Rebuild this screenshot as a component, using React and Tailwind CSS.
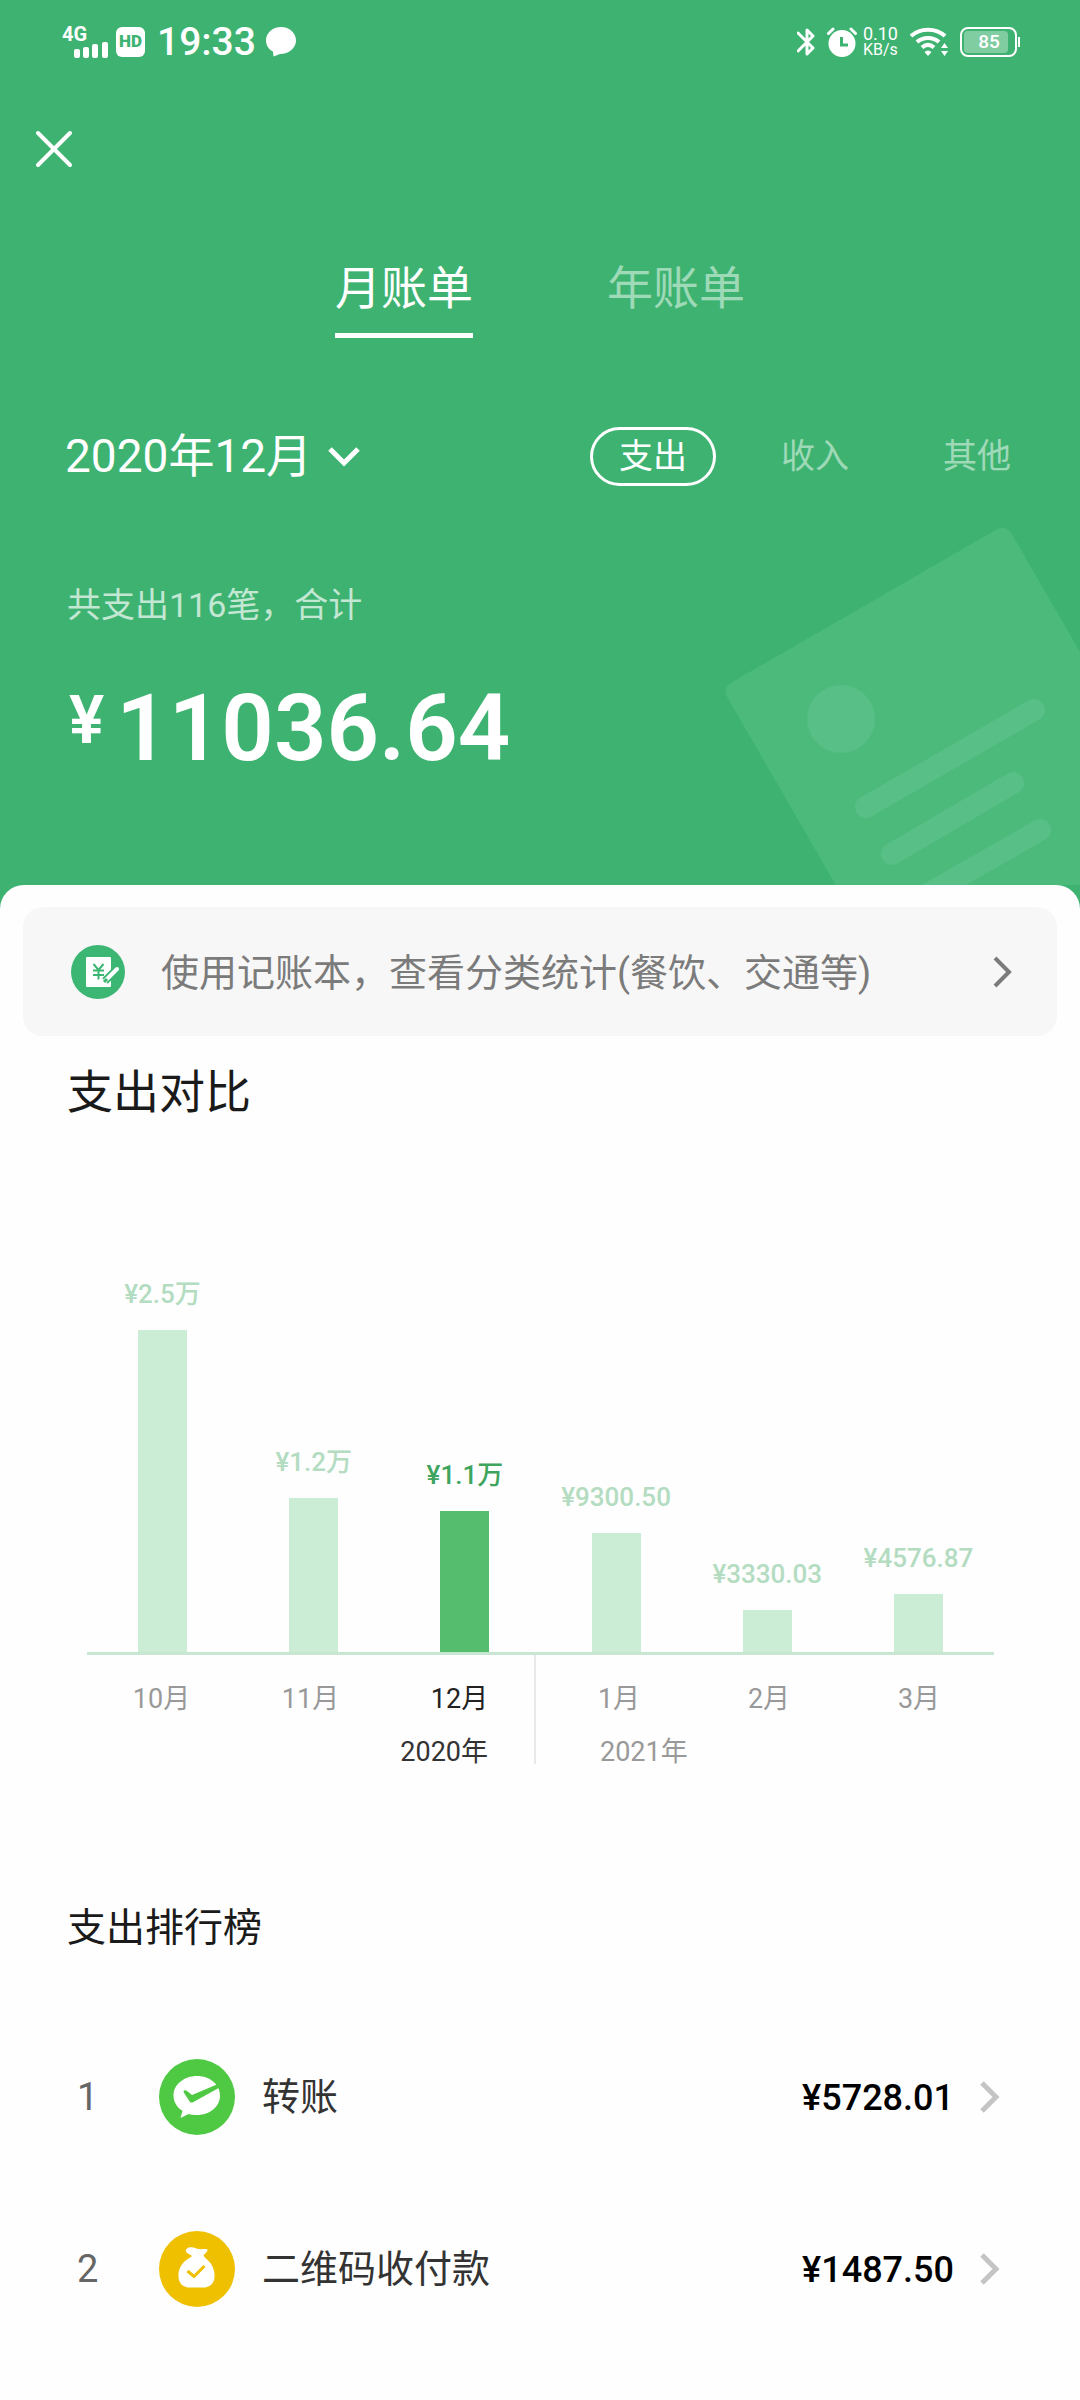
import { useState } from 'react';

const tabs = [
  { id: 'month', label: '月账单' },
  { id: 'year', label: '年账单' },
];

const kinds = ['支出', '收入', '其他'];

const bars = [
  { label: '¥2.5万', height: 322 },
  { label: '¥1.2万', height: 154 },
  { label: '¥1.1万', height: 141, active: true },
  { label: '¥9300.50', height: 119 },
  { label: '¥3330.03', height: 42 },
  { label: '¥4576.87', height: 58 },
];

const ranking = [
  { rank: 1, name: '转账', amount: '¥5728.01', Icon: TransferIcon },
  { rank: 2, name: '二维码收付款', amount: '¥1487.50', Icon: MoneyBagIcon },
];

function TransferIcon() {
  return (
    <svg className="w-19 h-19 shrink-0" viewBox="0 0 76 76" aria-hidden="true">
      <circle cx="38" cy="38" r="38" fill="#4fc944" />
      <path
        d="M38 17C25 17 14.500 25.500 14.500 36.500C14.500 43 18 48.500 23.500 51.800L21.500 59L29.500 55C32 55.700 35 56 38 56C51 56 61 47.500 61 36.500C61 25.500 51 17 38 17Z"
        fill="#fff"
      />
      <path
        d="M24.500 31.800C25.500 30.800 27 31 28 32L33 36L59 25L61 28.200L34 43.200C32.500 44 31 43.500 30.500 42.200L24.800 33.500Z"
        fill="#4fc944"
      />
    </svg>
  );
}

function MoneyBagIcon() {
  return (
    <svg className="w-19 h-19 shrink-0" viewBox="0 0 76 76" aria-hidden="true">
      <circle cx="38" cy="38" r="38" fill="#efc000" />
      <path
        d="M27 18.500C29.500 15.500 34 16 37 17.300C41 19 44.500 17.500 48.500 18.500C49 20.500 46.500 22 44.500 24.500C45.500 26.500 48 28 50.500 31C54 35 56 40.500 55.500 46C55 53 50.500 56.500 44 56.500H31C24.500 56.500 20 53 19.500 46C19 40 21.500 34.500 25.500 30.500C28 28 31.500 26.500 33 25C31 23 26 22.500 27 18.500Z"
        fill="#fff"
      />
      <path d="M28.500 40L35 45.500L45.500 35" fill="none" stroke="#efc000" strokeWidth="3" />
    </svg>
  );
}

function LedgerIcon() {
  return (
    <svg className="w-[54px] h-[54px] shrink-0" viewBox="0 0 54 54" aria-hidden="true">
      <circle cx="27" cy="27" r="27" fill="#3cb673" />
      <rect x="15" y="12" width="25" height="30" rx="1" fill="#fff" />
      <path
        d="M22.500 19L27.500 25L32.500 19M27.500 25V34.500M22 25.500H33M22 30H33"
        fill="none"
        stroke="#3cb673"
        strokeWidth="2"
      />
      <path d="M34 36L47 23" stroke="#3cb673" strokeWidth="8" />
      <path d="M34 36L46 24" stroke="#fff" strokeWidth="4" strokeLinecap="round" />
      <path d="M33 37L36 34" stroke="#3cb673" strokeWidth="3" />
    </svg>
  );
}

function Chevron({ className, strokeWidth = 4 }) {
  return (
    <svg className={className} viewBox="0 0 20 32" fill="none" stroke="currentColor" aria-hidden="true">
      <path d="M2 2L16 16L2 30" strokeWidth={strokeWidth} />
    </svg>
  );
}

function StatusBar() {
  return (
    <div className="flex h-21 items-center justify-between pl-[62px] pr-[60px]">
      <div className="flex items-center">
        <div className="mr-2 flex h-8 w-[46px] flex-col">
          <span className="text-[20px] font-bold leading-4">4G</span>
          <svg className="h-4 w-[34px] self-end" viewBox="0 0 34 16" fill="currentColor" aria-hidden="true">
            <rect x="0" y="7" width="6" height="9" rx="2" />
            <rect x="9" y="5" width="6" height="11" rx="2" />
            <rect x="18" y="2" width="6" height="14" rx="2" />
            <rect x="28" y="0" width="6" height="16" rx="2" />
          </svg>
        </div>
        <span className="flex h-[30px] w-[29px] items-center justify-center rounded-md bg-white text-[17px] font-black text-[#3eb371]">
          HD
        </span>
        <span className="ml-3 text-[39px] font-medium leading-10">19:33</span>
        <svg className="ml-2.5 h-[30px] w-[30px]" viewBox="0 0 30 30" fill="currentColor" aria-hidden="true">
          <path d="M15 0C6.500 0 0 6 0 13.500C0 18.500 3 22.500 7 24.500L7.500 29.500L14 27C23 27 30 21 30 13.500C30 6 23.500 0 15 0Z" />
        </svg>
      </div>

      <div className="flex items-center">
        <svg className="h-[30px] w-[18px]" viewBox="0 0 18 30" fill="none" stroke="currentColor" strokeWidth="3" aria-hidden="true">
          <path d="M1 6L16 21L10 27V3L16 9L1 24" strokeLinejoin="round" strokeLinecap="round" />
        </svg>
        <svg className="ml-3 h-[30px] w-[30px]" viewBox="0 0 30 30" aria-hidden="true">
          <circle cx="15" cy="16.500" r="13.500" fill="currentColor" />
          <path d="M1.500 6.500L6 2M28.500 6.500L24 2" stroke="currentColor" strokeWidth="3" strokeLinecap="round" />
          <path d="M14.500 10V18H21" fill="none" stroke="#3eb371" strokeWidth="3" />
        </svg>
        <div className="ml-1.5 flex flex-col text-[18px] leading-4">
          <span>0.10</span>
          <span className="text-[16px]">KB/s</span>
        </div>
        <svg className="ml-3 h-[30px] w-[38px]" viewBox="0 0 38 30" fill="none" stroke="currentColor" aria-hidden="true">
          <path d="M1 9C10 .5 26 .5 35 9" strokeWidth="4" />
          <path d="M7 15C13 9.500 23 9.500 29 15" strokeWidth="4" />
          <path d="M12 20.500C16 17 20 17 24 20.500" strokeWidth="4" />
          <path d="M14.500 25C17 23 19 23 21.500 25L18 29Z" fill="currentColor" stroke="none" />
          <path d="M34.500 16L38 21H31ZM34.500 29L38 24H31Z" fill="currentColor" stroke="none" />
        </svg>
        <div className="ml-3 flex h-[30px] w-[57px] items-center rounded-lg border-2 border-white p-0.5">
          <div className="h-full w-11 rounded-sm bg-white/35 pl-1.5 text-center text-[19px] font-medium leading-[22px]">85</div>
        </div>
        <div className="ml-px h-2.5 w-0.5 bg-white" />
      </div>
    </div>
  );
}

function ReceiptArt() {
  return (
    <svg className="absolute right-0 bottom-0 h-96 w-[400px]" viewBox="680 500 400 384" aria-hidden="true">
      <rect x="722" y="687" width="328" height="440" rx="10" fill="#4bba7a" transform="rotate(-30 722 687)" />
      <circle cx="841" cy="718" r="34" fill="#58bf86" />
      <g stroke="#58bf86" strokeWidth="22" strokeLinecap="round">
        <path d="M866 806L1034 709" />
        <path d="M892 853L1013 782" />
        <path d="M900 909L1040 829" />
      </g>
    </svg>
  );
}

function AxisGroup({ months, year, active, className = '' }) {
  return (
    <div className={`pt-8 text-[27px] leading-6 text-[#999] ${className}`}>
      <div className="grid grid-cols-3 text-center">
        {months.map((month) => (
          <span key={month} className={active === month ? 'text-[#222]' : ''}>
            {month}
          </span>
        ))}
      </div>
      <div className={`mt-[29px] ${active ? 'pr-[46px] text-right text-[#333]' : 'pl-14'}`}>{year}</div>
    </div>
  );
}

function ExpenseChart() {
  return (
    <div className="ml-[87px] mr-[86px]">
      <div className="grid h-[533px] grid-cols-6 border-b-3 border-[#c9e6d3]">
        {bars.map((bar) => (
          <div key={bar.label} className="flex flex-col items-center justify-end">
            <span
              className={`mb-[21px] text-[26px] font-medium leading-[30px] ${bar.active ? 'text-[#3fa55e]' : 'text-[#b3dcc1]'}`}
            >
              {bar.label}
            </span>
            <div
              className={`w-[49px] ${bar.active ? 'bg-[#54bd6e]' : 'bg-[#cbecd5]'}`}
              style={{ height: `${bar.height}px` }}
            />
          </div>
        ))}
      </div>
      <div className="grid grid-cols-[447fr_460fr]">
        <AxisGroup months={['10月', '11月', '12月']} year="2020年" active="12月" />
        <AxisGroup months={['1月', '2月', '3月']} year="2021年" className="border-l-2 border-[#e8e8e8] pl-2" />
      </div>
    </div>
  );
}

const App = () => {
  const [tab, setTab] = useState('month');
  const [kind, setKind] = useState('支出');

  return (
    <div className="flex min-h-screen flex-col bg-[#3eb371] font-['Roboto','Noto_Sans_CJK_SC',sans-serif] text-white">
      <header className="relative overflow-hidden pb-[108px]">
        <ReceiptArt />
        <div className="relative">
          <StatusBar />

          <div className="flex h-[130px] items-center px-[35px]">
            <button type="button" aria-label="关闭">
              <svg className="h-[38px] w-[38px]" viewBox="0 0 38 38" stroke="currentColor" strokeWidth="4" strokeLinecap="round">
                <path d="M3 3L35 35M35 3L3 35" />
              </svg>
            </button>
          </div>

          <div role="tablist" className="mt-[43px] flex justify-center gap-[134px]">
            {tabs.map((t) => (
              <button
                key={t.id}
                type="button"
                role="tab"
                aria-selected={tab === t.id}
                onClick={() => setTab(t.id)}
                className={`border-b-5 pb-3.5 text-[46px] leading-[62px] ${
                  tab === t.id ? 'border-white' : 'border-transparent text-white/50'
                }`}
              >
                {t.label}
              </button>
            ))}
          </div>

          <div className="mt-[89px] flex items-center justify-between pl-[65px] pr-10">
            <button type="button" className="flex items-center gap-4 text-[46px] leading-[59px]">
              2020年12月
              <svg className="h-[22px] w-8" viewBox="0 0 32 22" fill="none" stroke="currentColor" strokeWidth="5" aria-hidden="true">
                <path d="M2 3L16 17L30 3" />
              </svg>
            </button>
            <div className="flex gap-9">
              {kinds.map((k) => (
                <button
                  key={k}
                  type="button"
                  onClick={() => setKind(k)}
                  className={`rounded-full border-3 px-[26px] text-[34px] leading-[53px] ${
                    kind === k ? 'border-white' : 'border-transparent text-white/50'
                  }`}
                >
                  {k}
                </button>
              ))}
            </div>
          </div>

          <p className="mt-[95px] px-[67px] text-[34px] leading-12 text-white/70">共支出116笔，合计</p>
          <p className="mt-[52px] flex items-start gap-3 px-[69px] font-semibold">
            <span className="text-[66px] leading-[80px]">¥</span>
            <span className="text-[92px] leading-24">11036.64</span>
          </p>
        </div>
      </header>

      <main className="flex-1 rounded-t-3xl bg-[#fefefe] pt-[22px] text-[#1a1a1a]">
        <a href="#ledger" className="mx-[23px] flex h-[129px] items-center rounded-[20px] bg-[#f7f7f7] pl-12 pr-11 text-[#7b7b7b]">
          <LedgerIcon />
          <span className="ml-9 flex-1 pt-1 text-[38px]">使用记账本，查看分类统计(餐饮、交通等)</span>
          <Chevron className="h-8 w-5" />
        </a>

        <section>
          <h2 className="mt-[26px] px-[67px] text-[46px] leading-[60px]">支出对比</h2>
          <ExpenseChart />
        </section>

        <section>
          <h2 className="mt-[134px] px-[67px] text-[39px] leading-[60px]">支出排行榜</h2>
          <ul className="mt-[53px]">
            {ranking.map(({ rank, name, amount, Icon }) => (
              <li key={rank}>
                <a href={`#rank-${rank}`} className="flex h-43 items-center pl-[77px] pr-20">
                  <span className="w-[82px] text-[38px] text-[#666]">{rank}</span>
                  <Icon />
                  <span className="ml-[27px] flex-1 text-[38px] text-[#333]">{name}</span>
                  <span className="mr-[26px] pt-0.5 text-[36px] font-medium text-black">{amount}</span>
                  <Chevron className="h-8 w-5 text-[#c4c4c4]" strokeWidth={5} />
                </a>
              </li>
            ))}
          </ul>
        </section>
      </main>
    </div>
  );
};

export default App;
